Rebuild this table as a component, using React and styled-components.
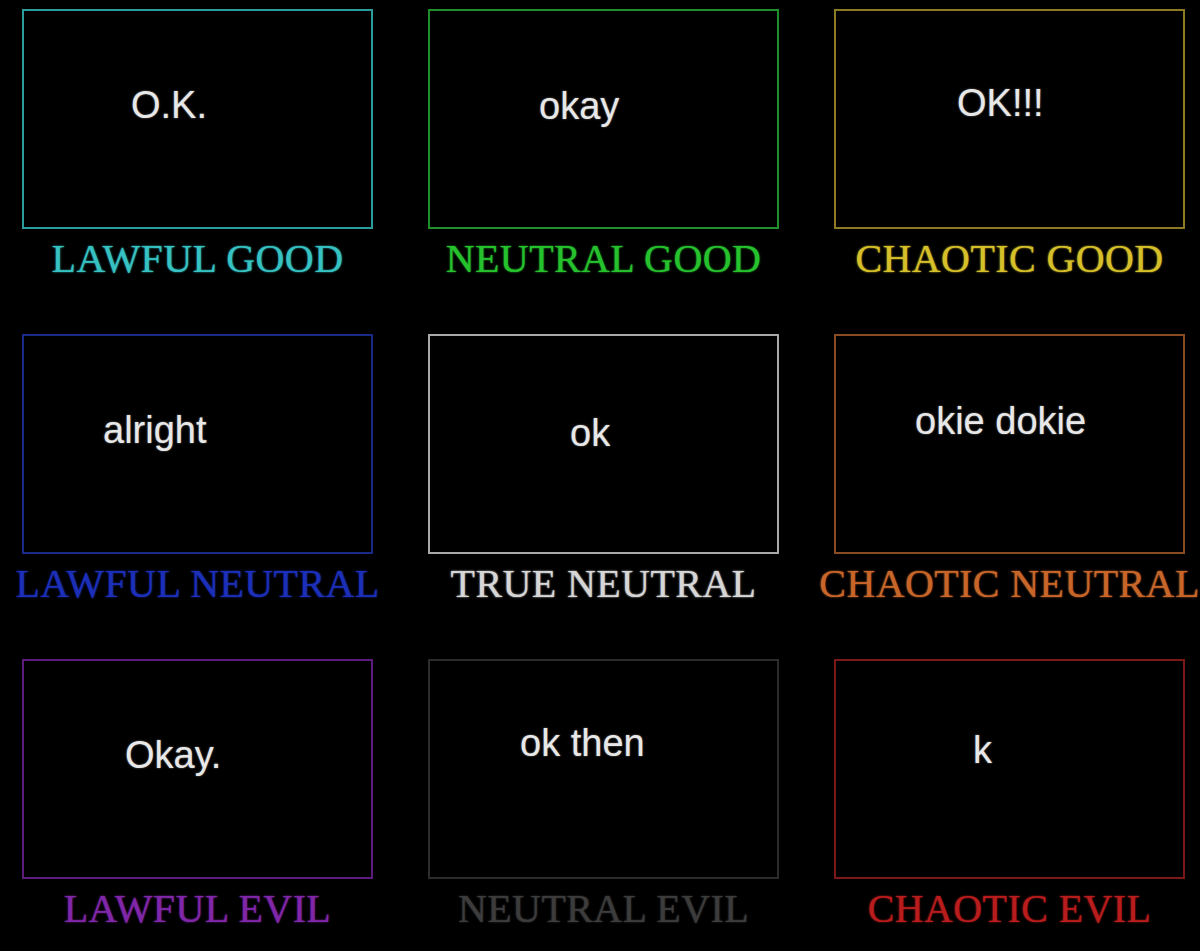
import React from 'react';
import styled, { createGlobalStyle } from 'styled-components';

const GlobalStyle = createGlobalStyle`
  html, body {
    margin: 0;
    padding: 0;
    background: #000;
  }
  body {
    width: 1200px;
    height: 951px;
    overflow: hidden;
  }
`;

const Page = styled.div`
  background: #000;
  width: 1200px;
  height: 951px;
  box-sizing: border-box;
  padding: 9px 0 0 22px;
`;

/* 3x3 alignment grid */
const Chart = styled.div`
  display: grid;
  grid-template-columns: repeat(3, 351px);
  grid-auto-rows: 270px;
  column-gap: 55px;
  row-gap: 55px;
`;

const Cell = styled.div`
  display: flex;
  flex-direction: column;
  align-items: center;
`;

const Frame = styled.div`
  width: 351px;
  height: 220px;
  box-sizing: border-box;
  border: 2px solid ${(p) => p.$border};
  padding: ${(p) => `${p.$top}px 0 0 ${p.$left}px`};
  align-self: stretch;
`;

const Quote = styled.div`
  font-family: 'Liberation Sans', Arial, sans-serif;
  font-size: 38px;
  line-height: 1;
  color: #e8e8e8;
  white-space: nowrap;
  text-shadow: 0 0 2px rgba(255, 255, 255, 0.5);
`;

const Label = styled.div`
  margin-top: 10px;
  font-family: 'Liberation Serif', 'Times New Roman', serif;
  font-size: 40px;
  line-height: 1;
  letter-spacing: 0.4px;
  white-space: nowrap;
  color: ${(p) => p.$color};
  text-shadow: 0 0 2px ${(p) => p.$color};
`;

const alignments = [
  { label: 'LAWFUL GOOD', text: 'O.K.', color: '#36c2c2', border: '#2a9c9c', left: 107, top: 75 },
  { label: 'NEUTRAL GOOD', text: 'okay', color: '#26c22e', border: '#1f8f2c', left: 109, top: 76 },
  { label: 'CHAOTIC GOOD', text: 'OK!!!', color: '#d6c02a', border: '#8c7b22', left: 121, top: 73 },
  { label: 'LAWFUL NEUTRAL', text: 'alright', color: '#1c2fb8', border: '#1b2a88', left: 79, top: 75 },
  { label: 'TRUE NEUTRAL', text: 'ok', color: '#d6d6d6', border: '#a8a8a8', left: 140, top: 78 },
  { label: 'CHAOTIC NEUTRAL', text: 'okie dokie', color: '#c8662a', border: '#8a4a22', left: 79, top: 66 },
  { label: 'LAWFUL EVIL', text: 'Okay.', color: '#8026a8', border: '#5c1c7c', left: 101, top: 75 },
  { label: 'NEUTRAL EVIL', text: 'ok then', color: '#3c3c3c', border: '#2c2c2c', left: 90, top: 63 },
  { label: 'CHAOTIC EVIL', text: 'k', color: '#b81c1c', border: '#7c1818', left: 137, top: 70 },
];

export default function App() {
  return (
    <Page>
      <GlobalStyle />
      <Chart>
        {alignments.map((a) => (
          <Cell key={a.label}>
            <Frame $border={a.border} $left={a.left} $top={a.top}>
              <Quote>{a.text}</Quote>
            </Frame>
            <Label $color={a.color}>{a.label}</Label>
          </Cell>
        ))}
      </Chart>
    </Page>
  );
}
